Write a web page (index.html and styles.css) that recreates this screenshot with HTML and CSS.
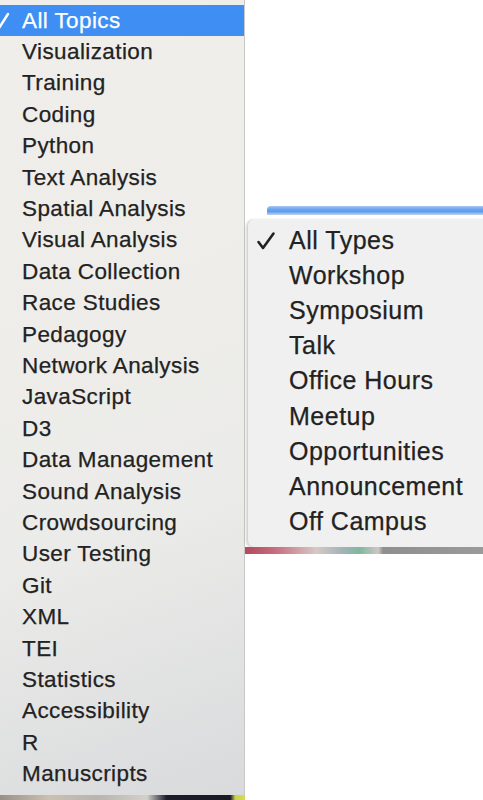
FILE: index.html
```html
<!DOCTYPE html>
<html>
<head>
<meta charset="utf-8">
<link rel="stylesheet" href="styles.css">
</head>
<body>
<div class="page">
  <div class="topics">
    <ul class="topics-menu">
      <li class="item selected"><span class="check"><svg width="20" height="20" viewBox="0 0 20 20"><path d="M2 11 L7 17 L16 3" fill="none" stroke="#fff" stroke-width="2.4" stroke-linecap="round" stroke-linejoin="round"/></svg></span><span>All Topics</span></li>
      <li class="item"><span class="check"></span><span>Visualization</span></li>
      <li class="item"><span class="check"></span><span>Training</span></li>
      <li class="item"><span class="check"></span><span>Coding</span></li>
      <li class="item"><span class="check"></span><span>Python</span></li>
      <li class="item"><span class="check"></span><span>Text Analysis</span></li>
      <li class="item"><span class="check"></span><span>Spatial Analysis</span></li>
      <li class="item"><span class="check"></span><span>Visual Analysis</span></li>
      <li class="item"><span class="check"></span><span>Data Collection</span></li>
      <li class="item"><span class="check"></span><span>Race Studies</span></li>
      <li class="item"><span class="check"></span><span>Pedagogy</span></li>
      <li class="item"><span class="check"></span><span>Network Analysis</span></li>
      <li class="item"><span class="check"></span><span>JavaScript</span></li>
      <li class="item"><span class="check"></span><span>D3</span></li>
      <li class="item"><span class="check"></span><span>Data Management</span></li>
      <li class="item"><span class="check"></span><span>Sound Analysis</span></li>
      <li class="item"><span class="check"></span><span>Crowdsourcing</span></li>
      <li class="item"><span class="check"></span><span>User Testing</span></li>
      <li class="item"><span class="check"></span><span>Git</span></li>
      <li class="item"><span class="check"></span><span>XML</span></li>
      <li class="item"><span class="check"></span><span>TEI</span></li>
      <li class="item"><span class="check"></span><span>Statistics</span></li>
      <li class="item"><span class="check"></span><span>Accessibility</span></li>
      <li class="item"><span class="check"></span><span>R</span></li>
      <li class="item"><span class="check"></span><span>Manuscripts</span></li>
    </ul>
    <div class="topics-strip"></div>
  </div>
  <div class="types-col">
    <div class="select-bar"></div>
    <ul class="types-menu">
      <li class="type"><span class="tcheck"><svg width="20" height="20" viewBox="0 0 20 20"><path d="M2.5 11 L7 17 L17.5 2.5" fill="none" stroke="#222" stroke-width="2.6" stroke-linecap="round" stroke-linejoin="round"/></svg></span><span>All Types</span></li>
      <li class="type"><span class="tcheck"></span><span>Workshop</span></li>
      <li class="type"><span class="tcheck"></span><span>Symposium</span></li>
      <li class="type"><span class="tcheck"></span><span>Talk</span></li>
      <li class="type"><span class="tcheck"></span><span>Office Hours</span></li>
      <li class="type"><span class="tcheck"></span><span>Meetup</span></li>
      <li class="type"><span class="tcheck"></span><span>Opportunities</span></li>
      <li class="type"><span class="tcheck"></span><span>Announcement</span></li>
      <li class="type"><span class="tcheck"></span><span>Off Campus</span></li>
    </ul>
    <div class="types-strip"></div>
  </div>
</div>
</body>
</html>
```

FILE: styles.css
```css
* { box-sizing: border-box; }
html, body { margin: 0; padding: 0; background: #fff; }
body {
  font-family: "Liberation Sans", Arial, Helvetica, sans-serif;
  color: #222;
}
ul { list-style: none; margin: 0; padding: 0; }

.page {
  display: flex;
  width: 483px;
  height: 800px;
  overflow: hidden;
  background: #fff;
}

.topics {
  width: 245px;
  flex: none;
  display: flex;
  flex-direction: column;
}
.topics-menu {
  flex: 1;
  padding-top: 5px;
  border-right: 1px solid #c8c8c6;
  background: linear-gradient(160deg, #efeeea 0%, #eeede9 40%, #ebebe9 65%, #d9dadc 100%);
}
.item {
  height: 31.4px;
  display: flex;
  align-items: center;
  font-size: 22.5px;
  letter-spacing: 0.4px;
  white-space: nowrap;
  -webkit-text-stroke: 0.25px currentColor;
}
.item.selected {
  background: #3f8ef4;
  color: #fff;
}
.check {
  width: 30px;
  margin-left: -8px;
  flex: none;
  display: flex;
  align-items: center;
}
.topics-strip {
  height: 5px;
  flex: none;
  background: linear-gradient(to right, #9a8f86 0%, #c9c0b2 20%, #b7b5ae 40%, #d2d0c8 60%, #1d1c2b 68%, #1a1a26 94%, #c9d24a 96%, #d6dc55 100%);
}

.types-col {
  flex: 1;
  display: flex;
  flex-direction: column;
  padding-top: 206px;
}
.select-bar {
  height: 9px;
  margin-left: 22px;
  border-radius: 4px 0 0 0;
  background: linear-gradient(#a9c6f0 0%, #6ea5f0 35%, #5b9af0 60%, #c3d3ea 100%);
}
.types-menu {
  margin: 4px 0 0 2px;
  padding: 4px 0 8px;
  background: #f0f0f0;
  border-radius: 7px 0 0 7px;
  border-left: 1px solid #d4d4d4;
  box-shadow: -1px 1px 3px rgba(0,0,0,0.18);
}
.type {
  height: 35.1px;
  display: flex;
  align-items: center;
  font-size: 25px;
  letter-spacing: 0.5px;
  white-space: nowrap;
  -webkit-text-stroke: 0.25px currentColor;
}
.tcheck {
  width: 41px;
  padding-left: 8px;
  flex: none;
  display: flex;
  align-items: center;
}
.types-strip {
  height: 7px;
  flex: none;
  background: linear-gradient(to right, #b3495e 0%, #c66a7c 12%, #d6c9c6 30%, #a8b4ba 40%, #7fb7a0 48%, #cfc7c2 56%, #8f8f8f 58%, #9a9a9a 100%);
}
```
